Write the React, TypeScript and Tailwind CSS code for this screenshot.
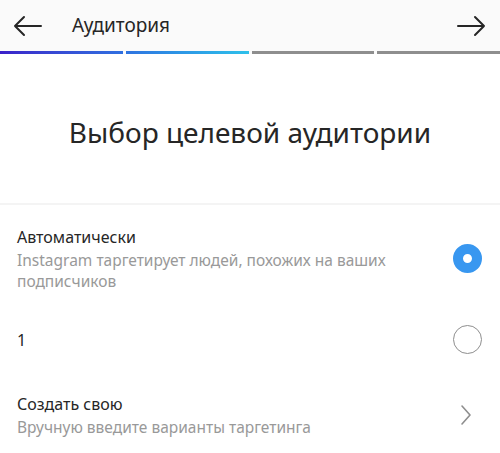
const font = { fontFamily: '"Noto Sans", "Open Sans", sans-serif' };

function Segment({ fill }: { fill: string }) {
  return <div className={`h-[3px] flex-1 ${fill}`} />;
}

function Option({ title, sub, right }: { title: string; sub?: string; right: React.ReactNode }) {
  return (
    <div className="flex items-center justify-between pl-[17px] pr-[17px]">
      <div className="flex flex-col">
        <div className="text-[16px] leading-[24px] text-[#262626]">{title}</div>
        {sub && <div className="mt-[1px] w-[400px] text-[15.5px] leading-[21px] text-[#999999]">{sub}</div>}
      </div>
      {right}
    </div>
  );
}

export default function App() {
  return (
    <div className="h-[453px] w-[500px] overflow-hidden bg-white" style={font}>
      <div className="flex h-[51px] items-center bg-[#fafafa]">
        <svg width="30" height="22" viewBox="0 0 30 22" className="ml-[13px]" fill="none" stroke="#262626" strokeWidth="2" strokeLinecap="round" strokeLinejoin="round">
          <path d="M28 11H2M11 2L2 11l9 9" />
        </svg>
        <div className="ml-[29px] flex-1 text-[19px] text-[#262626]">Аудитория</div>
        <svg width="30" height="22" viewBox="0 0 30 22" className="mr-[14px]" fill="none" stroke="#262626" strokeWidth="2" strokeLinecap="round" strokeLinejoin="round">
          <path d="M2 11h26M19 2l9 9-9 9" />
        </svg>
      </div>
      <div className="flex gap-[3px] bg-[#fafafa]">
        <Segment fill="bg-gradient-to-r from-[#3a1fc9] to-[#2f6fe0]" />
        <Segment fill="bg-gradient-to-r from-[#2f73e0] to-[#2fc0ea]" />
        <Segment fill="bg-[#8e8e8e]" />
        <Segment fill="bg-[#8e8e8e]" />
      </div>
      <div className="flex h-[149px] items-center justify-center pt-[6px] text-[28px] text-[#262626]">
        Выбор целевой аудитории
      </div>
      <div className="h-[2px] bg-[#f4f4f4]" />
      <div className="pt-[20px]">
        <Option
          title="Автоматически"
          sub="Instagram таргетирует людей, похожих на ваших подписчиков"
          right={<div className="mr-[1px] h-[29px] w-[29px] rounded-full border-[10px] border-[#3897f0]" />}
        />
      </div>
      <div className="pt-[33px]">
        <Option
          title="1"
          right={<div className="mr-[1px] h-[29px] w-[29px] rounded-full border-[1.5px] border-[#8e8e8e]" />}
        />
      </div>
      <div className="pt-[38px]">
        <Option
          title="Создать свою"
          sub="Вручную введите варианты таргетинга"
          right={
            <svg width="14" height="22" viewBox="0 0 14 22" className="mr-[10px]" fill="none" stroke="#8e8e8e" strokeWidth="1.6" strokeLinecap="round" strokeLinejoin="round">
              <path d="M3 2l8 9-8 9" />
            </svg>
          }
        />
      </div>
    </div>
  );
}
